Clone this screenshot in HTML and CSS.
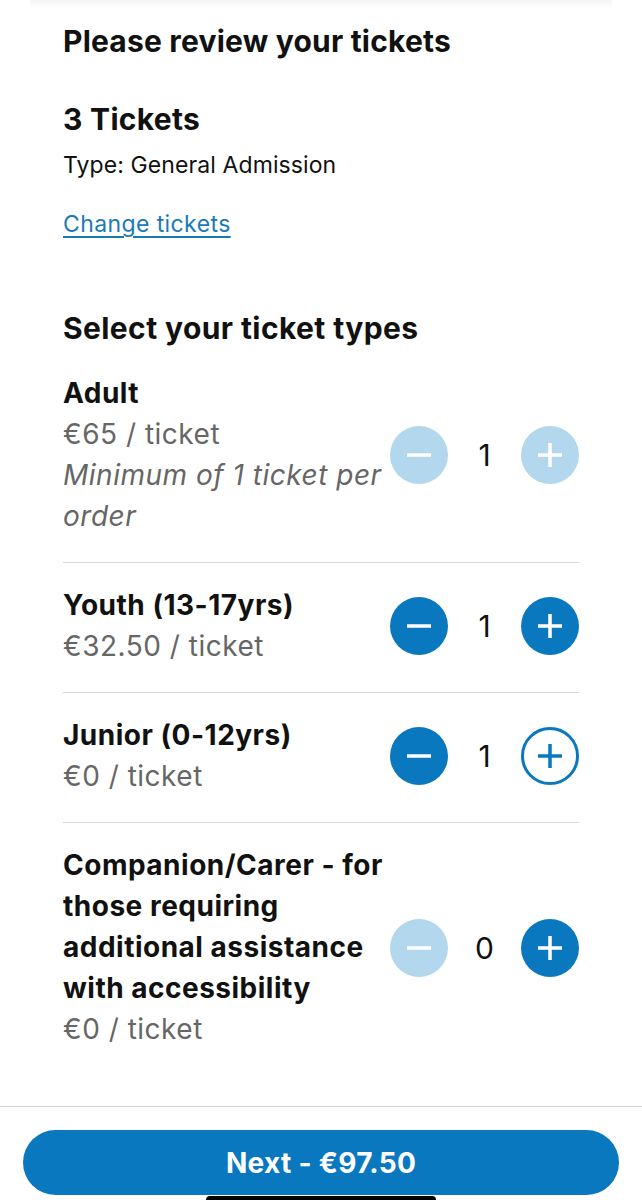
FILE: index.html
```html
<!DOCTYPE html>
<html lang="en">
<head>
<meta charset="utf-8">
<link rel="stylesheet" href="styles.css">
</head>
<body>
<div class="page">
  <div class="top-shade"></div>
  <main class="content">
    <h1 class="h-review">Please review your tickets</h1>
    <h2 class="h-count">3 Tickets</h2>
    <p class="type">Type: General Admission</p>
    <a class="change" href="#">Change tickets</a>
    <h2 class="h-select">Select your ticket types</h2>

    <ul class="rows">
      <li class="row">
        <div class="info">
          <div class="name">Adult</div>
          <div class="price">€65 / ticket</div>
          <div class="note">Minimum of 1 ticket per order</div>
        </div>
        <div class="ctrl">
          <span class="btn btn-off"><svg viewBox="0 0 58 58"><path d="M17 29h24"/></svg></span>
          <span class="qty">1</span>
          <span class="btn btn-off"><svg viewBox="0 0 58 58"><path d="M17 29h24M29 17v24"/></svg></span>
        </div>
      </li>
      <li class="row">
        <div class="info">
          <div class="name">Youth (13-17yrs)</div>
          <div class="price">€32.50 / ticket</div>
        </div>
        <div class="ctrl">
          <span class="btn btn-on"><svg viewBox="0 0 58 58"><path d="M17 29h24"/></svg></span>
          <span class="qty">1</span>
          <span class="btn btn-on"><svg viewBox="0 0 58 58"><path d="M17 29h24M29 17v24"/></svg></span>
        </div>
      </li>
      <li class="row">
        <div class="info">
          <div class="name">Junior (0-12yrs)</div>
          <div class="price">€0 / ticket</div>
        </div>
        <div class="ctrl">
          <span class="btn btn-on"><svg viewBox="0 0 58 58"><path d="M17 29h24"/></svg></span>
          <span class="qty">1</span>
          <span class="btn btn-outline"><svg viewBox="0 0 58 58"><path d="M17 29h24M29 17v24"/></svg></span>
        </div>
      </li>
      <li class="row last">
        <div class="info">
          <div class="name">Companion/Carer - for those requiring additional assistance with accessibility</div>
          <div class="price">€0 / ticket</div>
        </div>
        <div class="ctrl">
          <span class="btn btn-off"><svg viewBox="0 0 58 58"><path d="M17 29h24"/></svg></span>
          <span class="qty">0</span>
          <span class="btn btn-on"><svg viewBox="0 0 58 58"><path d="M17 29h24M29 17v24"/></svg></span>
        </div>
      </li>
    </ul>
  </main>
  <footer class="footer">
    <button class="next">Next - €97.50</button>
    <div class="home-bar"></div>
  </footer>
</div>
</body>
</html>
```

FILE: styles.css
```css
* { box-sizing: border-box; }
html, body { margin: 0; padding: 0; background: #fff; }
body {
  font-family: Inter, "Noto Sans", "Liberation Sans", sans-serif;
  color: #111;
  overflow: hidden;
  height: 1200px;
}
.page { width: 642px; }
.top-shade {
  height: 8px;
  margin: 0 30px;
  background: linear-gradient(#f5f5f5, #fff);
}
.content { padding: 0 63px; }
h1, h2, p { margin: 0; }
.h-review {
  margin-top: 15px;
  font-size: 30px;
  line-height: 36px;
  font-weight: 700;
  letter-spacing: 0.2px;
}
.h-count {
  margin-top: 42px;
  font-size: 30px;
  line-height: 36px;
  font-weight: 700;
  letter-spacing: 0.3px;
}
.type {
  margin-top: 13px;
  font-size: 23px;
  line-height: 30px;
  letter-spacing: 0.1px;
}
.change {
  display: inline-block;
  margin-top: 29px;
  font-size: 23px;
  line-height: 30px;
  letter-spacing: 0.4px;
  color: #1a7ab7;
  text-decoration: underline;
  text-underline-offset: 4px;
  text-decoration-thickness: 1.5px;
}
.h-select {
  margin-top: 71px;
  font-size: 30px;
  line-height: 36px;
  font-weight: 700;
  letter-spacing: 0.4px;
}
.rows { list-style: none; margin: 0; padding: 0; }
.row {
  display: flex;
  align-items: center;
  justify-content: space-between;
  padding: 22px 0 25px;
  border-bottom: 1px solid #d9d9d9;
}
.rows .row:first-child { padding-top: 27px; }
.row.last { border-bottom: none; padding-bottom: 56px; }
.info { width: 330px; }
.name, .price, .note {
  font-size: 28px;
  line-height: 41px;
  letter-spacing: 0.5px;
}
.name { font-weight: 700; }
.price { color: #666; }
.note { color: #666; font-style: italic; }
.ctrl {
  display: flex;
  align-items: center;
}
.qty {
  width: 73px;
  text-align: center;
  font-size: 30px;
  font-weight: 400;
  color: #111;
}
.btn {
  width: 58px;
  height: 58px;
  border-radius: 50%;
  display: flex;
  flex: none;
}
.btn svg { width: 58px; height: 58px; }
.btn path { fill: none; stroke-width: 3.5; stroke-linecap: butt; }
.btn-on { background: #0a78be; }
.btn-on path { stroke: #fff; }
.btn-off { background: #b3d7ed; }
.btn-off path { stroke: #fff; }
.btn-outline { background: #fff; border: 3px solid #0a78be; }
.btn-outline svg { margin: -3px; }
.btn-outline path { stroke: #0a78be; }
.footer {
  border-top: 1px solid #d4d4d4;
  padding: 23px 23px 0;
}
.next {
  display: block;
  width: 100%;
  height: 65px;
  border: none;
  border-radius: 33px;
  background: #0a78be;
  color: #fff;
  font-family: Inter, "Noto Sans", "Liberation Sans", sans-serif;
  font-size: 28px;
  font-weight: 700;
  letter-spacing: 0.3px;
}
.home-bar {
  width: 230px;
  height: 8px;
  margin: 1px auto 0;
  background: #000;
  border-radius: 4px;
}
```
